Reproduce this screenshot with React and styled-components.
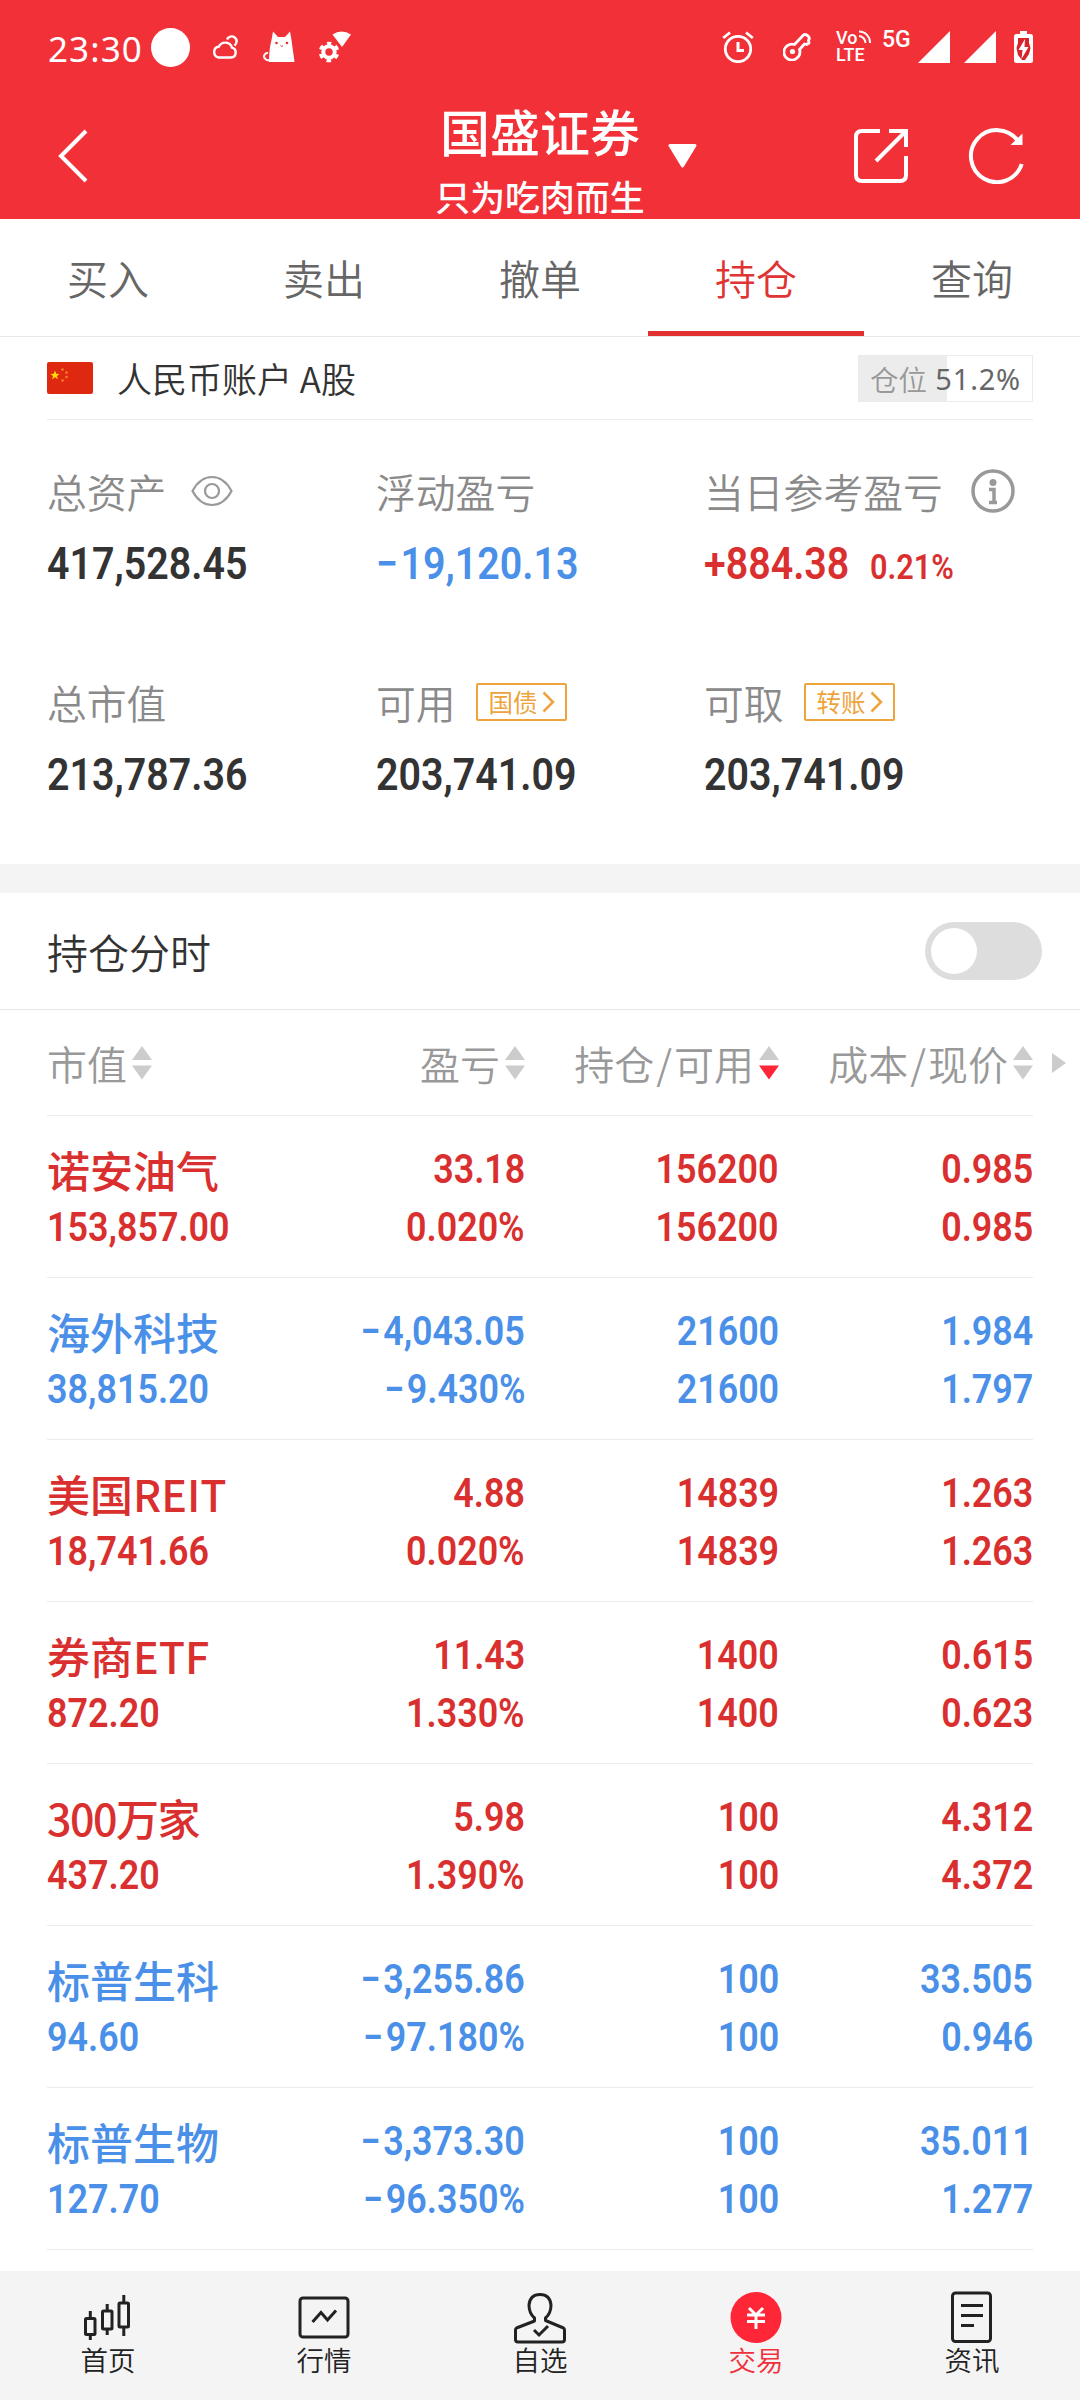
import React, { useState } from "react";
import styled, { createGlobalStyle } from "styled-components";

const RED = "#d9302f";
const BLUE = "#4a90e8";

const GlobalStyle = createGlobalStyle`
  body {
    margin: 0;
    background: #fff;
    font-family: "Noto Sans CJK SC", sans-serif;
    color: #333;
  }
  * {
    box-sizing: border-box;
  }
  svg {
    display: block;
    flex: none;
  }
`;

const Screen = styled.div`
  width: 1080px;
  height: 2400px;
  display: flex;
  flex-direction: column;
  background: #fff;
  overflow: hidden;
`;

const Header = styled.header`
  height: 219px;
  background: #f23038;
  color: #fff;
`;

const StatusBar = styled.div`
  height: 94px;
  display: flex;
  align-items: center;
  padding: 0 47px 0 48px;
`;

const Clock = styled.span`
  width: 103px;
  font-family: "Noto Sans", sans-serif;
  font-size: 35px;
  line-height: 40px;
  letter-spacing: 1.1px;
  padding-top: 3px;
`;

const Dot = styled.span`
  width: 39px;
  height: 39px;
  border-radius: 50%;
  background: #fff;
`;

const StatusIcon = styled.svg`
  margin-left: ${(props) => props.$gap}px;
`;

const Spacer = styled.div`
  flex: 1;
`;

const Volte = styled.div`
  width: 34px;
  height: 34px;
  margin-left: 25px;
  font-family: Roboto, sans-serif;
  font-weight: 500;
  font-size: 18px;
  line-height: 18px;
`;

const VolteTop = styled.div`
  display: flex;
  height: 16px;
  line-height: 15px;
`;

const NetType = styled.span`
  width: 30px;
  margin-left: 12px;
  align-self: flex-start;
  margin-top: 26px;
  font-family: Roboto, sans-serif;
  font-weight: 500;
  font-size: 23px;
  line-height: 28px;
`;

const TitleBar = styled.div`
  height: 125px;
  display: grid;
  grid-template-columns: 430px 220px 1fr;
`;

const BackButton = styled.div`
  padding: 35px 0 0 56px;
`;

const TitleBlock = styled.div`
  text-align: center;
  white-space: nowrap;
  padding-top: 3px;
`;

const Title = styled.h1`
  margin: 0;
  font-size: 50px;
  font-weight: 500;
  line-height: 66px;
`;

const Subtitle = styled.p`
  margin: 13px 0 0;
  font-size: 34.9px;
  font-weight: 500;
  line-height: 40px;
`;

const Actions = styled.div`
  display: flex;
  align-items: center;
  padding: 0 0 2px 18px;
`;

const Tabs = styled.nav`
  height: 118px;
  display: flex;
  border-bottom: 1px solid #e8e8e8;
`;

const Tab = styled.div`
  flex: 1;
  text-align: center;
  font-size: 41px;
  font-weight: 350;
  line-height: 116px;
  height: 117px;
  color: ${(props) => (props.$active ? "#e03434" : "#666")};
  border-bottom: ${(props) => (props.$active ? "5px solid #e03030" : "0")};
`;

const Account = styled.div`
  height: 83px;
  margin: 0 47px;
  display: flex;
  align-items: center;
  border-bottom: 1px solid #ebebeb;
`;

const AccountName = styled.span`
  margin-left: 24px;
  font-size: 35px;
  font-weight: 350;
  line-height: 50px;
  color: #333;
`;

const Position = styled.div`
  width: 175px;
  height: 47px;
  display: flex;
  align-items: center;
  justify-content: space-between;
  padding: 0 11px 0 11px;
  border: 1px solid #ebebeb;
  background: linear-gradient(90deg, #ececec 51%, #fff 51%);
  font-size: 28.5px;
  font-weight: 350;
  color: #999;
`;

const PositionValue = styled.span`
  font-family: "Noto Sans", sans-serif;
  font-size: 29px;
  font-weight: 400;
  letter-spacing: 0.8px;
  color: #666;
`;

const Summary = styled.section`
  display: grid;
  grid-template-columns: 329px 328px 1fr;
  row-gap: 88px;
  height: 444px;
  padding: 46px 0 0 47px;
  align-content: start;
`;

const Label = styled.div`
  height: 50px;
  display: flex;
  align-items: center;
  font-size: 39.8px;
  font-weight: 350;
  line-height: 50px;
  color: #8a8a8a;
`;

const Value = styled.div`
  display: flex;
  align-items: baseline;
  height: 50px;
  margin-top: 23px;
  line-height: 50px;
  color: ${(props) => props.$color || "#333"};
`;

// condensed numerals, scaled towards the side they are aligned to
const NumText = styled.span`
  display: inline-block;
  font-family: Roboto, sans-serif;
  font-size: ${(props) => props.$size || 41}px;
  font-weight: 600;
  line-height: inherit;
  white-space: nowrap;
  transform: scaleX(0.875);
  transform-origin: ${(props) => (props.$left ? "left" : "right")} center;
`;

const Minus = styled.span`
  margin-right: 3px;
`;

const Tag = styled.span`
  width: 91px;
  height: 38px;
  margin-left: 20px;
  padding-left: 11px;
  display: flex;
  align-items: center;
  gap: 4px;
  border: 2px solid #eda43c;
  border-radius: 2px;
  font-size: 24.5px;
  font-weight: 400;
  line-height: 32px;
  color: #eda43c;
`;

const Band = styled.div`
  height: 29px;
  background: #f4f4f4;
`;

const IntradayRow = styled.div`
  height: 117px;
  display: flex;
  align-items: center;
  justify-content: space-between;
  padding: 0 38px 0 47px;
  border-bottom: 1px solid #e8e8e8;
  font-size: 41px;
  font-weight: 350;
  color: #333;
`;

const Switch = styled.button`
  width: 117px;
  height: 58px;
  padding: 6px;
  border: 0;
  border-radius: 29px;
  background: #ddd;
  display: flex;
  justify-content: ${(props) => (props.$on ? "flex-end" : "flex-start")};
`;

const Knob = styled.span`
  width: 46px;
  height: 46px;
  border-radius: 50%;
  background: #fff;
`;

const TableHead = styled.div`
  display: flex;
  align-items: center;
  padding-left: 47px;
`;

const Columns = styled.div`
  display: grid;
  grid-template-columns: 200px 278px 254px 254px;
  width: 986px;
  border-bottom: 1px solid #ebebeb;
`;

const HeadColumns = styled(Columns)`
  height: 106px;
  align-items: center;
  margin-right: 19px;
`;

const HeadCell = styled.div`
  display: flex;
  align-items: center;
  gap: 5px;
  justify-content: ${(props) => (props.$left ? "flex-start" : "flex-end")};
  font-size: 40px;
  font-weight: 350;
  line-height: 60px;
  white-space: nowrap;
  color: #999;
`;

const Slash = styled.span`
  margin: 0 2px;
`;

const Row = styled(Columns)`
  height: 162px;
  margin-left: 47px;
  padding-top: 24px;
  align-content: start;
  color: ${(props) => (props.$down ? BLUE : RED)};
`;

const Cell = styled.div`
  display: flex;
  flex-direction: column;
  align-items: ${(props) => (props.$left ? "flex-start" : "flex-end")};
  line-height: 58px;
`;

const Name = styled.div`
  height: 58px;
  font-size: 43px;
  font-weight: 500;
  letter-spacing: ${(props) => (props.$tight ? "-1.5px" : "0")};
  white-space: nowrap;
`;

const Bottom = styled.footer`
  height: 129px;
  margin-top: auto;
  display: flex;
  background: #f4f4f4;
`;

const BottomItem = styled.div`
  flex: 1;
  display: flex;
  flex-direction: column;
  align-items: center;
  padding-top: 20px;
  font-size: 27.5px;
  font-weight: 350;
  line-height: 34px;
  color: ${(props) => (props.$active ? "#f0303c" : "#222")};

  svg {
    margin-bottom: -3px;
  }
`;

const BottomIcon = ({ children }) => (
  <svg
    width="54"
    height="54"
    viewBox="0 0 54 54"
    fill="none"
    stroke="#222"
    strokeWidth="3"
  >
    {children}
  </svg>
);

const SortArrows = ({ sorted }) => (
  <svg width="20" height="34" viewBox="0 0 20 34">
    <path d="M10 0L20 14H0Z" fill="#ccc" />
    <path d="M0 19.500H20L10 33.500Z" fill={sorted ? "#ff2638" : "#ccc"} />
  </svg>
);

const Chevron = () => (
  <svg width="13" height="22" viewBox="0 0 13 22" fill="none">
    <path d="M1.500 1.500L11 11L1.500 20.500" stroke="#eda43c" strokeWidth="2.500" />
  </svg>
);

const Signal = ({ gap }) => (
  <StatusIcon $gap={gap} width="32" height="32" viewBox="0 0 32 32">
    <path d="M32 0V32H0Z" fill="#fff" />
  </StatusIcon>
);

const Flag = () => (
  <svg width="46" height="32" viewBox="0 0 46 32">
    <rect width="46" height="32" rx="2" fill="#de2910" />
    <path
      d="M8 8.500L9.200 11.800L12.500 12L9.900 14L10.900 17.200L8 15.300L5.100 17.200L6.100 14L3.500 12L6.800 11.800Z"
      fill="#ffde00"
    />
    <g fill="#f0812a">
      <circle cx="15.500" cy="7.500" r="1.300" />
      <circle cx="19.500" cy="10.500" r="1.300" />
      <circle cx="19.500" cy="15" r="1.300" />
      <circle cx="15.500" cy="18.500" r="1.300" />
    </g>
  </svg>
);

const holdings = [
  { name: "诺安油气", value: "153,857.00", profit: "33.18", rate: "0.020%", held: "156200", cost: "0.985", price: "0.985" },
  { name: "海外科技", value: "38,815.20", profit: "−4,043.05", rate: "−9.430%", held: "21600", cost: "1.984", price: "1.797", down: true },
  { name: "美国REIT", value: "18,741.66", profit: "4.88", rate: "0.020%", held: "14839", cost: "1.263", price: "1.263" },
  { name: "券商ETF", value: "872.20", profit: "11.43", rate: "1.330%", held: "1400", cost: "0.615", price: "0.623" },
  { name: "300万家", value: "437.20", profit: "5.98", rate: "1.390%", held: "100", cost: "4.312", price: "4.372", tight: true },
  { name: "标普生科", value: "94.60", profit: "−3,255.86", rate: "−97.180%", held: "100", cost: "33.505", price: "0.946", down: true },
  { name: "标普生物", value: "127.70", profit: "−3,373.30", rate: "−96.350%", held: "100", cost: "35.011", price: "1.277", down: true },
];

const tabs = ["买入", "卖出", "撤单", "持仓", "查询"];

const Num = ({ value, left, size }) => (
  <NumText $left={left} $size={size}>
    {value[0] === "−" ? (
      <>
        <Minus>−</Minus>
        {value.slice(1)}
      </>
    ) : (
      value
    )}
  </NumText>
);

const Amount = ({ color, value }) => (
  <Value $color={color}>
    <Num left size={45} value={value} />
  </Value>
);

const App = () => {
  const [tab, setTab] = useState("持仓");
  const [intraday, setIntraday] = useState(false);

  return (
    <>
      <GlobalStyle />
      <Screen>
        <Header>
          <StatusBar>
            <Clock>23:30</Clock>
            <Dot />
            <StatusIcon $gap={22} width="26" height="24" viewBox="0 0 26 24" fill="none" stroke="#fff" strokeWidth="2.400">
              <path d="M6.500 22.500H19A5 5 0 0 0 20 12.700A7 7 0 0 0 7 11.500A5.600 5.600 0 0 0 6.500 22.500Z" />
              <path d="M15 4.500A5 5 0 1 1 22.500 10.500" />
            </StatusIcon>
            <StatusIcon $gap={25} width="32" height="32" viewBox="0 0 32 32">
              <path d="M10 0.500L15 6H22L27 0.500L28.500 9L31.500 31H6Q6 18 8.500 9Z" fill="#fff" />
              <path d="M8 29.500C2 30 0 26 1.700 23.500Q3 21.500 5 22" fill="none" stroke="#fff" strokeWidth="2" />
              <circle cx="13.500" cy="12" r="1.300" fill="#d33" />
              <circle cx="24" cy="12" r="1.300" fill="#d33" />
              <path d="M17.500 14.500L18.800 15.500L20 14.500" fill="none" stroke="#d33" />
            </StatusIcon>
            <StatusIcon $gap={23} width="34" height="32" viewBox="0 0 34 32" fill="none" stroke="#fff">
              <circle cx="11" cy="21" r="5.700" strokeWidth="4" />
              <circle cx="11" cy="21" r="8.700" strokeWidth="3.200" strokeDasharray="4.500 4.610" strokeDashoffset="2.250" transform="rotate(-90 11 21)" />
              <path d="M14.500 3.500Q23.500 -2.500 33 3.500L24 16Z" fill="#fff" stroke="none" />
            </StatusIcon>
            <Spacer />
            <StatusIcon $gap={0} width="32" height="32" viewBox="0 0 32 32" fill="none" stroke="#fff" strokeWidth="2.800">
              <circle cx="16" cy="18" r="12.700" />
              <path d="M16 11V19.500H22" strokeWidth="3" />
              <path d="M1.200 7L8 1.500M30.800 7L24 1.500" />
            </StatusIcon>
            <StatusIcon $gap={29} width="28" height="28" viewBox="0 0 28 28" fill="none" stroke="#fff" strokeWidth="2.800">
              <path d="M11.500 11.500L20.500 2Q22 0.800 24.500 2.500Q27.500 5 25.500 7.200L26 10L23.500 11.500L21.500 11L16.500 16.500A8 8 0 1 1 11.500 11.500Z" strokeLinejoin="round" />
              <circle cx="9.500" cy="18.500" r="2.600" fill="#fff" stroke="none" />
            </StatusIcon>
            <Volte>
              <VolteTop>
                Vo
                <svg width="14" height="14" viewBox="0 0 14 14" fill="none" stroke="#fff" strokeWidth="2">
                  <path d="M2 1.500A11 11 0 0 1 13 13M2 6A7 7 0 0 1 8.500 13" />
                </svg>
              </VolteTop>
              LTE
            </Volte>
            <NetType>5G</NetType>
            <Signal gap={6} />
            <Signal gap={14} />
            <StatusIcon $gap={18} width="19" height="32" viewBox="0 0 19 32">
              <path d="M6 0H13V3H16.500Q19 3 19 5.500V29.500Q19 32 16.500 32H2.500Q0 32 0 29.500V5.500Q0 3 2.500 3H6Z" fill="#fff" />
              <path d="M4 7H15V12L16.500 17L15 23L11 29H8L4 24L2.500 17L4 12Z" fill="#d8222c" />
              <path d="M11 8L4.500 19H8.500L7.500 28L14.500 16H10.500Z" fill="#fff" />
            </StatusIcon>
          </StatusBar>
          <TitleBar>
            <BackButton>
              <svg width="36" height="54" viewBox="0 0 36 54" fill="none">
                <path d="M30 2L5 27L30 52" stroke="#fff" strokeWidth="4" />
              </svg>
            </BackButton>
            <TitleBlock>
              <Title>国盛证券</Title>
              <Subtitle>只为吃肉而生</Subtitle>
            </TitleBlock>
            <Actions>
              <svg width="29" height="24" viewBox="0 0 29 24">
                <path d="M2 1.500H27L14.500 22Z" fill="#fff" stroke="#fff" strokeWidth="3" strokeLinejoin="round" />
              </svg>
              <Spacer />
              <svg width="54" height="54" viewBox="0 0 54 54" fill="none" stroke="#fff" strokeWidth="4">
                <path d="M26 2H8Q2 2 2 8V46Q2 52 8 52H46Q52 52 52 46V27" />
                <path d="M35 2H52V18M51 3L22 32" />
              </svg>
              <svg width="117" height="56" viewBox="-62 0 117 56" fill="none" stroke="#fff" strokeWidth="4">
                <path d="M51.700 36A26 26 0 1 1 47.800 12.600" />
                <path d="M52.500 5.500V17H40.500Z" fill="#fff" stroke="none" />
              </svg>
              <svg width="55" height="1" />
            </Actions>
          </TitleBar>
        </Header>

        <Tabs>
          {tabs.map((name) => (
            <Tab key={name} $active={name === tab} onClick={() => setTab(name)}>
              {name}
            </Tab>
          ))}
        </Tabs>

        <Account>
          <Flag />
          <AccountName>人民币账户 A股</AccountName>
          <Spacer />
          <Position>
            仓位<PositionValue>51.2%</PositionValue>
          </Position>
        </Account>

        <Summary>
          <div>
            <Label>
              总资产
              <StatusIcon $gap={25} width="42" height="32" viewBox="0 0 42 32" fill="none" stroke="#999" strokeWidth="2.200">
                <path d="M1.500 16Q9 2 21 2T40.500 16Q33 30 21 30T1.500 16Z" />
                <circle cx="21" cy="16" r="7" />
              </StatusIcon>
            </Label>
            <Amount value="417,528.45" />
          </div>
          <div>
            <Label>浮动盈亏</Label>
            <Amount color={BLUE} value="−19,120.13" />
          </div>
          <div>
            <Label>
              当日参考盈亏
              <StatusIcon $gap={28} width="44" height="44" viewBox="0 0 44 44" fill="none" stroke="#999" strokeWidth="3.500">
                <circle cx="22" cy="22" r="20" />
                <circle cx="22" cy="13.500" r="3.500" fill="#999" stroke="none" />
                <path d="M18 20.500H23V33M18 33.500H26" />
              </StatusIcon>
            </Label>
            <Value $color={RED}>
              <Num left size={45} value="+884.38" />
              <Num left size={35} value="0.21%" />
            </Value>
          </div>
          <div>
            <Label>总市值</Label>
            <Amount value="213,787.36" />
          </div>
          <div>
            <Label>
              可用
              <Tag>
                国债
                <Chevron />
              </Tag>
            </Label>
            <Amount value="203,741.09" />
          </div>
          <div>
            <Label>
              可取
              <Tag>
                转账
                <Chevron />
              </Tag>
            </Label>
            <Amount value="203,741.09" />
          </div>
        </Summary>

        <Band />

        <IntradayRow>
          持仓分时
          <Switch $on={intraday} onClick={() => setIntraday(!intraday)}>
            <Knob />
          </Switch>
        </IntradayRow>

        <TableHead>
          <HeadColumns>
            <HeadCell $left>
              市值
              <SortArrows />
            </HeadCell>
            <HeadCell>
              盈亏
              <SortArrows />
            </HeadCell>
            <HeadCell>
              <span>
                持仓<Slash>/</Slash>可用
              </span>
              <SortArrows sorted />
            </HeadCell>
            <HeadCell>
              <span>
                成本<Slash>/</Slash>现价
              </span>
              <SortArrows />
            </HeadCell>
          </HeadColumns>
          <svg width="14" height="20" viewBox="0 0 14 20">
            <path d="M0 0L14 10L0 20Z" fill="#ccc" />
          </svg>
        </TableHead>

        {holdings.map((item) => (
          <Row key={item.name} $down={item.down}>
            <Cell $left>
              <Name $tight={item.tight}>{item.name}</Name>
              <Num left value={item.value} />
            </Cell>
            <Cell>
              <Num value={item.profit} />
              <Num value={item.rate} />
            </Cell>
            <Cell>
              <Num value={item.held} />
              <Num value={item.held} />
            </Cell>
            <Cell>
              <Num value={item.cost} />
              <Num value={item.price} />
            </Cell>
          </Row>
        ))}

        <Bottom>
          <BottomItem>
            <BottomIcon>
              <rect x="4.500" y="27.500" width="9.500" height="16" rx="1" />
              <rect x="21.500" y="20" width="9.500" height="18" rx="1" />
              <rect x="38" y="12" width="9.500" height="24" rx="1" />
              <path d="M9.300 20V27M9.300 44V49M26.200 13V20M26.200 38V44M42.800 4V12M42.800 36V45" />
            </BottomIcon>
            首页
          </BottomItem>
          <BottomItem>
            <BottomIcon>
              <rect x="3" y="7" width="48" height="39" rx="3" />
              <path d="M15.500 31L24 21.500L30.500 29L39 19.500" />
            </BottomIcon>
            行情
          </BottomItem>
          <BottomItem>
            <BottomIcon>
              <path
                d="M21.500 27C18 24 16 20 16 14Q17 3.500 27 3.500T38 14C38 20 36 24 32.500 27V29.500L50.500 37Q51.500 37.500 51.500 39V48.500Q51.500 51 49 51H5Q2.500 51 2.500 48.500V39Q2.500 37.500 3.500 37L21.500 30Z"
                strokeLinejoin="round"
              />
              <path d="M21 39L26 44L35 35" />
            </BottomIcon>
            自选
          </BottomItem>
          <BottomItem $active>
            <BottomIcon>
              <circle cx="27" cy="26.500" r="25.500" fill="#ff2638" stroke="none" />
              <path d="M20 17L27 24L34 17M18 24H36M18 30.500H36M27 24V38" stroke="#fff" />
            </BottomIcon>
            交易
          </BottomItem>
          <BottomItem>
            <BottomIcon>
              <rect x="7.500" y="2" width="38" height="48.500" rx="3" />
              <path d="M16 14.500H38M16 24.500H38M16 34.500H29" />
            </BottomIcon>
            资讯
          </BottomItem>
        </Bottom>
      </Screen>
    </>
  );
};

export default App;
